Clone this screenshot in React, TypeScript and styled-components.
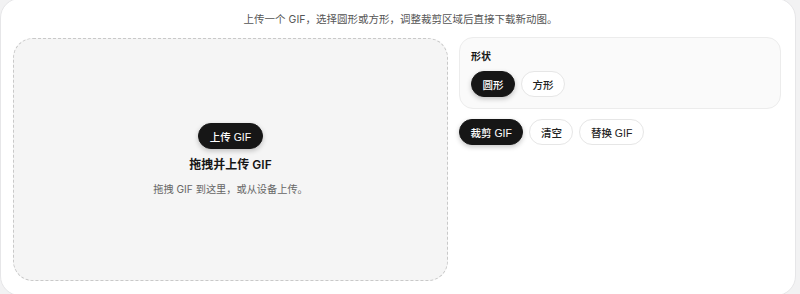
import styled, { createGlobalStyle } from "styled-components";
import { useState } from "react";

const GlobalStyle = createGlobalStyle`
  html, body {
    margin: 0;
    padding: 0;
    background: #f2f2f3;
  }
  body {
    font-family: Inter, "Noto Sans CJK SC", sans-serif;
    color: #1a1a1a;
    overflow: hidden;
  }
`;

const Card = styled.div`
  box-sizing: border-box;
  width: 796px;
  height: 298px;
  margin-top: -2px;
  background: #ffffff;
  border: 1px solid #e6e6e8;
  border-radius: 20px;
  padding: 12px 13px 0 12px;
  display: flex;
  flex-direction: column;
  gap: 8px;
`;

const Intro = styled.p`
  margin: 0;
  padding-left: 6px;
  text-align: center;
  font-size: 10.5px;
  line-height: 18px;
  color: #555;
`;

const Body = styled.div`
  display: grid;
  grid-template-columns: 435px 322px;
  gap: 11px;
  align-items: start;
`;

const DropZone = styled.div`
  box-sizing: border-box;
  margin-top: 1px;
  height: 243px;
  background: #f5f5f5;
  border: 1px dashed #c9c9c9;
  border-radius: 20px;
  display: flex;
  flex-direction: column;
  align-items: center;
  justify-content: center;
`;

const Pill = styled.button<{ $dark?: boolean }>`
  box-sizing: border-box;
  height: 26px;
  padding: 0 10.5px;
  border-radius: 13px;
  font-family: "Liberation Sans", "Noto Sans CJK SC", sans-serif;
  font-size: 10.5px;
  font-weight: 500;
  white-space: nowrap;
  cursor: pointer;
  border: 1px solid ${(p) => (p.$dark ? "#161616" : "#e6e6e6")};
  background: ${(p) => (p.$dark ? "#161616" : "#ffffff")};
  color: ${(p) => (p.$dark ? "#ffffff" : "#222")};
  box-shadow: ${(p) => (p.$dark ? "0 2px 5px rgba(0,0,0,0.22)" : "none")};
`;

const DropTitle = styled.div`
  margin-top: 8px;
  font-size: 12px;
  line-height: 16px;
  font-weight: 600;
  color: #161616;
`;

const DropHint = styled.div`
  margin-top: 9px;
  font-size: 10.2px;
  line-height: 14px;
  color: #666;
`;

const Side = styled.div`
  display: flex;
  flex-direction: column;
  gap: 10px;
`;

const Panel = styled.div`
  box-sizing: border-box;
  background: #fafafa;
  border: 1px solid #ececec;
  border-radius: 14px;
  padding: 11px;
  display: flex;
  flex-direction: column;
  gap: 8px;
`;

const Label = styled.div`
  font-size: 10px;
  line-height: 14px;
  font-weight: 700;
  color: #161616;
`;

const Row = styled.div`
  display: flex;
  gap: 6px;
`;

export default function App() {
  const [shape, setShape] = useState<"circle" | "square">("circle");

  return (
    <>
      <GlobalStyle />
      <Card>
        <Intro>上传一个 GIF，选择圆形或方形，调整裁剪区域后直接下载新动图。</Intro>
        <Body>
          <DropZone>
            <Pill $dark>上传 GIF</Pill>
            <DropTitle>拖拽并上传 GIF</DropTitle>
            <DropHint>拖拽 GIF 到这里，或从设备上传。</DropHint>
          </DropZone>
          <Side>
            <Panel>
              <Label>形状</Label>
              <Row>
                <Pill $dark={shape === "circle"} onClick={() => setShape("circle")}>圆形</Pill>
                <Pill $dark={shape === "square"} onClick={() => setShape("square")}>方形</Pill>
              </Row>
            </Panel>
            <Row>
              <Pill $dark>裁剪 GIF</Pill>
              <Pill>清空</Pill>
              <Pill>替换 GIF</Pill>
            </Row>
          </Side>
        </Body>
      </Card>
    </>
  );
}
